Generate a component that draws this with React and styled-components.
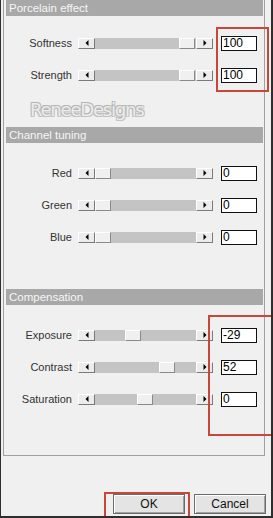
import React from "react";
import styled, { createGlobalStyle } from "styled-components";

const Global = createGlobalStyle`
  html, body {
    margin: 0;
    padding: 0;
    background: #f0f0f0;
  }
  * {
    box-sizing: border-box;
  }
`;

const Window = styled.div`
  position: relative;
  width: 273px;
  height: 518px;
  background: #f0f0f0;
  border-left: 1px solid #2e2e2e;
  border-right: 2px solid #2e2e2e;
  border-bottom: 2px solid #2e2e2e;
  padding-left: 2px;
  font-family: "Liberation Sans", Arial, sans-serif;
  overflow: hidden;
`;

const Panel = styled.div`
  width: 262px;
  height: 456px;
  border: 1px solid #a0a0a0;
  border-top: none;
  display: flex;
  flex-direction: column;
`;

const Header = styled.div`
  margin: ${p => p.$top}px 1px 0 2px;
  height: 16px;
  background: #a8a8a8;
  color: #f6f6f6;
  font-size: 11.5px;
  line-height: 16px;
  padding-left: 3px;
`;

const Rows = styled.div`
  display: flex;
  flex-direction: column;
  padding-top: ${p => p.$top}px;
`;

const Row = styled.div`
  height: 32px;
  display: flex;
  align-items: center;
`;

const Label = styled.div`
  width: 68px;
  text-align: right;
  font-size: 11px;
  color: #333;
  margin-right: 6px;
`;

const ArrowButton = styled.div`
  width: 17px;
  height: 11px;
  background: #ececec;
  border-top: 1px solid #ffffff;
  border-left: 1px solid #ffffff;
  border-right: 1px solid #7a7a7a;
  border-bottom: 1px solid #7a7a7a;
  display: flex;
  align-items: center;
  justify-content: center;
`;

const Track = styled.div`
  position: relative;
  width: 101px;
  height: 11px;
  background: #c4c4c4;
`;

const Thumb = styled.div`
  position: absolute;
  top: 0;
  width: 16px;
  height: 11px;
  background: #f0f0f0;
  border-top: 1px solid #ffffff;
  border-left: 1px solid #ffffff;
  border-right: 1px solid #8a8a8a;
  border-bottom: 1px solid #8a8a8a;
`;

const ValueBox = styled.div`
  margin-left: 8px;
  width: 36px;
  height: 15px;
  background: #ffffff;
  border: 1px solid #111;
  font-size: 12px;
  line-height: 13px;
  padding-left: 1px;
  color: #000;
`;

const Watermark = styled.div`
  height: 36px;
  padding: 9px 0 0 26px;
  font-family: "DejaVu Sans", "Liberation Sans", sans-serif;
  font-size: 18px;
  line-height: 20px;
  letter-spacing: -1.2px;
  color: #ececec;
  text-shadow: -1px -1px 0 #b4b4b4, 1px 1px 0 #c4c4c4, 1px -1px 0 #bcbcbc, -1px 1px 0 #bcbcbc;
`;

const Footer = styled.div`
  display: flex;
  justify-content: flex-end;
  gap: 9px;
  padding-right: 5px;
  margin-top: 38px;
`;

const DialogButton = styled.div`
  width: 72px;
  height: 20px;
  background: #e4e4e4;
  border: 1px solid #6c6c6c;
  box-shadow: inset 1px 1px 0 #ffffff, inset -1px -1px 0 #a0a0a0;
  font-size: 12px;
  line-height: 18px;
  text-align: center;
  color: #111;
`;

const Highlight = styled.div`
  position: absolute;
  border: 2px solid #c8473a;
  left: ${p => p.$x}px;
  top: ${p => p.$y}px;
  width: ${p => p.$w}px;
  height: ${p => p.$h}px;
`;

const Arrow = ({ dir }) => (
  <svg width="4" height="6" viewBox="0 0 4 6">
    {dir === "left" ? (
      <polygon points="3.5,0 3.5,6 0.5,3" fill="#000" />
    ) : (
      <polygon points="0.5,0 0.5,6 3.5,3" fill="#000" />
    )}
  </svg>
);

const Slider = ({ label, value, min, max }) => {
  const left = Math.round(((value - min) / (max - min)) * (101 - 17));
  return (
    <Row>
      <Label>{label}</Label>
      <ArrowButton>
        <Arrow dir="left" />
      </ArrowButton>
      <Track>
        <Thumb style={{ left }} />
      </Track>
      <ArrowButton>
        <Arrow dir="right" />
      </ArrowButton>
      <ValueBox>{value}</ValueBox>
    </Row>
  );
};

const porcelain = [
  { label: "Softness", value: 100, min: 0, max: 100 },
  { label: "Strength", value: 100, min: 0, max: 100 },
];

const channels = [
  { label: "Red", value: 0, min: 0, max: 255 },
  { label: "Green", value: 0, min: 0, max: 255 },
  { label: "Blue", value: 0, min: 0, max: 255 },
];

const compensation = [
  { label: "Exposure", value: -29, min: -100, max: 100 },
  { label: "Contrast", value: 52, min: -100, max: 100 },
  { label: "Saturation", value: 0, min: -100, max: 100 },
];

const App = () => (
  <Window>
    <Global />
    <Panel>
      <Header $top={0}>Porcelain effect</Header>
      <Rows $top={11}>
        {porcelain.map(s => (
          <Slider key={s.label} {...s} />
        ))}
      </Rows>
      <Watermark>ReneeDesigns</Watermark>
      <Header $top={0}>Channel tuning</Header>
      <Rows $top={14}>
        {channels.map(s => (
          <Slider key={s.label} {...s} />
        ))}
      </Rows>
      <Header $top={36}>Compensation</Header>
      <Rows $top={14}>
        {compensation.map(s => (
          <Slider key={s.label} {...s} />
        ))}
      </Rows>
    </Panel>
    <Footer>
      <DialogButton>OK</DialogButton>
      <DialogButton>Cancel</DialogButton>
    </Footer>
    <Highlight $x={215} $y={27} $w={53} $h={65} />
    <Highlight $x={207} $y={315} $w={70} $h={121} />
    <Highlight $x={103} $y={492} $w={86} $h={26} />
  </Window>
);

export default App;
